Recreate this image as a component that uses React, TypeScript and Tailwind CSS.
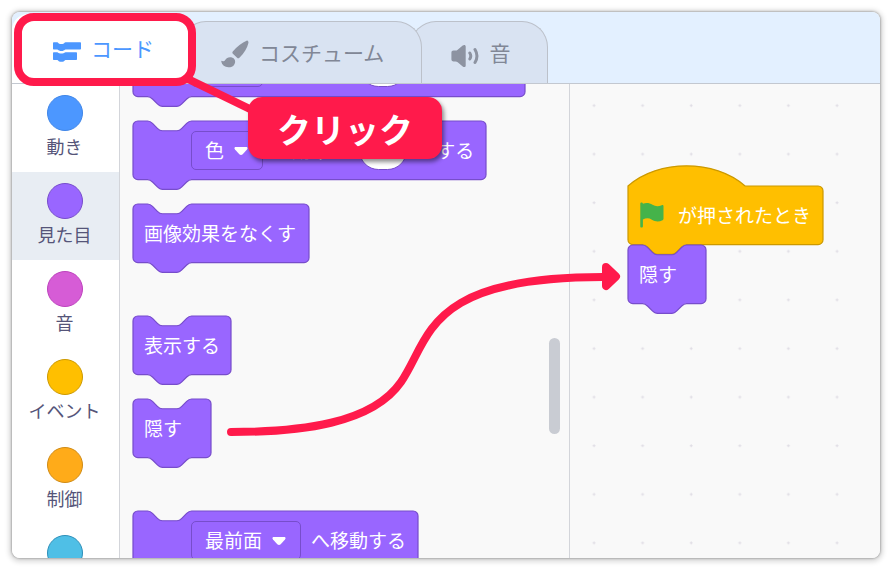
import type { ReactNode } from "react";
import { clsx } from "clsx";

const UNIT = 1.22;
const NOTCH = "H12c2 0 3 1 4 2l4 4c1 1 2 2 4 2h12c2 0 3-1 4-2l4-4c1-1 2-2 4-2";
const BUMP = "H48c-2 0-3 1-4 2l-4 4c-1 1-2 2-4 2H24c-2 0-3-1-4-2l-4-4c-1-1-2-2-4-2H4";

const CATEGORIES = [
  { name: "動き", circle: "bg-[#4c97ff] border-[#3f86e8]" },
  { name: "見た目", circle: "bg-[#9966ff] border-[#774dcb]" },
  { name: "音", circle: "bg-[#d65cd6] border-[#bd42bd]" },
  { name: "イベント", circle: "bg-[#ffbf00] border-[#cc9900]" },
  { name: "制御", circle: "bg-[#ffab19] border-[#cf8b17]" },
  { name: "", circle: "bg-[#4fbfe6] border-[#2e8eb8]" },
];

type BlockProps = {
  width: number;
  hat?: boolean;
  className?: string;
  children: ReactNode;
};

function Block({ width, hat, className, children }: BlockProps) {
  const w = width / UNIT;
  const top = hat ? "M0 0c25-22 71-22 96 0" : `M0 4a4 4 0 0 1 4-4${NOTCH}`;
  const d = `${top}H${w - 4}a4 4 0 0 1 4 4v40a4 4 0 0 1-4 4${BUMP}a4 4 0 0 1-4-4z`;

  return (
    <div
      className={clsx("relative h-[59px] shrink-0 text-[19px] text-white", className)}
      style={{ width }}
    >
      <svg className="absolute inset-0 size-full overflow-visible" aria-hidden="true">
        <path
          d={d}
          transform={`scale(${UNIT})`}
          fill={hat ? "#ffbf00" : "#9966ff"}
          stroke={hat ? "#cc9900" : "#774dcb"}
        />
      </svg>
      <div className="relative flex h-full items-center gap-2.5 pb-px pl-[11px] whitespace-nowrap">
        {children}
      </div>
    </div>
  );
}

function Dropdown({ value, label, className }: { value: string; label: string; className: string }) {
  return (
    <span className={clsx("relative ml-[47px] flex h-[39px] shrink-0", className)}>
      <select
        aria-label={label}
        className="w-full appearance-none rounded-[5px] border border-[#774dcb] bg-[#9966ff] pl-[13px] text-white"
      >
        <option>{value}</option>
      </select>
      <svg className="pointer-events-none absolute top-4 right-[15px] h-2 w-3.5" viewBox="0 0 14 8" fill="#fff" aria-hidden="true">
        <path d="M2 0h10c1.600 0 2 1.400 1 2.500L8.700 7.200c-1 1-2.400 1-3.400 0L1 2.500C0 1.400.4 0 2 0z" />
      </svg>
    </span>
  );
}

function NumberField({ label, value }: { label: string; value: string }) {
  return (
    <input
      aria-label={label}
      defaultValue={value}
      className="h-[39px] w-12 shrink-0 rounded-full border border-[#774dcb] bg-white text-center text-[#575e75]"
    />
  );
}

function CodeIcon() {
  return (
    <svg className="mt-1.5 h-5 w-7" viewBox="0 0 28 20" fill="currentColor" aria-hidden="true">
      <path d="M0 1.200C0 .5.400.2 1 .2h3.200c1 0 1.500 1.800 3 1.800h2.200c1.500 0 2-1.800 3.200-1.800H27c.7 0 1 .4 1 1v5.400c0 .7-.4 1-1 1H12.600c-1 0-1.500 1.300-3 1.300H7.200c-1.500 0-2-1.300-3-1.300H1c-.7 0-1-.4-1-1z" />
      <path d="M0 11.200c0-.7.400-1 1-1h3.200c1 0 1.500 1.300 3 1.300h2.200c1.500 0 2-1.300 3.200-1.300H23c.7 0 1 .4 1 1V17c0 .7-.4 1-1 1H12.600c-1 0-1.500 1.800-3 1.800H7.200c-1.500 0-2-1.800-3-1.800H1c-.7 0-1-.4-1-1z" />
    </svg>
  );
}

function BrushIcon() {
  return (
    <svg className="mt-0.5 h-7 w-7" viewBox="0 0 28 28" fill="#8d93a1" aria-hidden="true">
      <path d="M26 .4c1.200.2 1.700 1.300 1.400 2.600-1.100 4.700-4.200 10.200-9 14.700-.7.700-1.600.7-2.300 0l-4.200-4c-.7-.7-.7-1.400-.1-2.200C15.900 6.600 20.900 2.500 26 .4z" />
      <path d="M9 17.300c3.500 0 5.500 2.200 5.100 5-.4 3.300-3.200 5.300-6.800 5-3.500-.2-6.300-2-7-5.500-.1-.8.300-1.100.9-.9 1.800.7 2.500.2 3.200-1.100 1-1.600 2.400-2.500 4.600-2.500z" />
    </svg>
  );
}

function SoundIcon() {
  return (
    <svg className="mt-1.5 h-6 w-7" viewBox="0 0 28 24" aria-hidden="true">
      <path
        fill="#8d93a1"
        d="M2.600 6.600h2c.8 0 1.400-.3 2.100-.9l5-4.100c1.500-1.100 3-.6 3 1v18.800c0 1.600-1.500 2.100-3 1l-5-4.100c-.7-.6-1.300-.9-2.100-.9h-2C1.200 17.400.4 16.600.4 15.200V8.800c0-1.400.8-2.200 2.200-2.200z"
      />
      <path
        fill="none"
        stroke="#8d93a1"
        strokeWidth="3"
        strokeLinecap="round"
        d="M18.800 9c1.300 2 1.300 4 0 6M24 5.500c2.600 4.300 2.600 8.700 0 13"
      />
    </svg>
  );
}

function GreenFlag() {
  return (
    <svg className="ml-px h-[26px] w-6 shrink-0" viewBox="0 0 24 26" aria-hidden="true">
      <path
        fill="#45b34a"
        d="M1.500.5c1 0 1.400.6 1.400 1.300 3.500-1.500 6.600-.9 9.600 1 3 1.800 5.800 1.900 9.300.4.900-.4 1.700 0 1.700 1v12.600c0 .7-.3 1.100-.9 1.400-3.800 1.700-7.200 1.600-10.700-.5-3-1.800-5.800-1.700-9-.3v6.800c0 .8-.5 1.300-1.400 1.300S.3 25 .3 24.200V1.800C.3 1.100.6.500 1.500.5z"
      />
    </svg>
  );
}

const tabClass =
  "relative flex items-center gap-2.5 border border-b-0 pl-10 pr-[37px] text-[21px] whitespace-nowrap";
const activeTab = "z-20 h-[69px] rounded-t-2xl border-white bg-white pb-px text-[#4c97ff]";
const idleTab = "-ml-3 h-[62px] rounded-t-[26px] border-[#bcc1ca] bg-[#d9e3f2] text-[#818796]";

function TabBar() {
  return (
    <header
      role="tablist"
      className="flex h-[72px] shrink-0 items-end border-b border-[#c3c8d0] bg-[#e3f0ff]"
    >
      <button role="tab" aria-selected="true" className={clsx(tabClass, activeTab)}>
        <CodeIcon />
        コード
      </button>
      <button role="tab" aria-selected="false" className={clsx(tabClass, idleTab, "z-10")}>
        <BrushIcon />
        コスチューム
      </button>
      <button role="tab" aria-selected="false" className={clsx(tabClass, idleTab)}>
        <SoundIcon />
        音
      </button>
    </header>
  );
}

function CategoryMenu() {
  return (
    <nav className="w-[108px] shrink-0 overflow-hidden border-r border-[#d3d5da] bg-white">
      {CATEGORIES.map((category) => (
        <button
          key={category.circle}
          aria-label={category.name || "調べる"}
          className={clsx(
            "flex h-[88px] w-full flex-col items-center pt-[11px] pr-0.5 text-[18px] leading-[22px] text-[#555579]",
            category.name === "見た目" && "bg-[#e8edf3]"
          )}
        >
          <span className={clsx("size-9 rounded-full border", category.circle)} />
          <span className="mt-1">{category.name}</span>
        </button>
      ))}
    </nav>
  );
}

function Palette() {
  return (
    <section className="relative w-[450px] shrink-0 overflow-hidden border-r border-[#d3d5da] bg-[#f9f9f9] pl-[13px]">
      {/* scrolled part way down, so the first block is cut by the tabs */}
      <div className="-mt-[46px] flex flex-col gap-6">
        <Block width={392}>
          <Dropdown value="色" label="効果" className="w-[72px]" />
          の効果を
          <NumberField label="変える量" value="25" />
          ずつ変える
        </Block>
        <Block width={353}>
          <Dropdown value="色" label="効果" className="w-[72px]" />
          の効果を
          <NumberField label="効果の値" value="0" />
          にする
        </Block>
        <Block width={176}>画像効果をなくす</Block>
        <Block width={98} className="mt-[29px]">表示する</Block>
        <Block width={78}>隠す</Block>
        <Block width={285} className="mt-[29px]">
          <Dropdown value="最前面" label="移動先" className="w-[110px]" />
          へ移動する
        </Block>
      </div>
      <div className="absolute top-[254px] right-[9px] h-24 w-[11px] rounded-full bg-[#c9ccd3]" />
    </section>
  );
}

function Workspace() {
  return (
    <section className="relative min-w-0 flex-1 overflow-hidden bg-[#f9f9f9]">
      <svg className="absolute inset-0 size-full" aria-hidden="true">
        <defs>
          <pattern id="grid" width="48.600" height="48.600" patternUnits="userSpaceOnUse">
            <path d="M22.500 21.500h3M24 20v3" stroke="#dfdce4" />
          </pattern>
        </defs>
        <rect width="100%" height="100%" fill="url(#grid)" />
      </svg>
      <div className="absolute top-[102px] left-[58px]">
        <Block width={195} hat>
          <GreenFlag />
          <span className="ml-1">が押されたとき</span>
        </Block>
        <Block width={78}>隠す</Block>
      </div>
    </section>
  );
}

function Guide() {
  return (
    <div className="pointer-events-none absolute inset-0 z-30">
      <svg className="absolute inset-0 size-full" fill="none" stroke="#ff1a4b" aria-hidden="true">
        <rect x="18" y="17" width="174" height="65" rx="16" strokeWidth="8" />
        <path d="M188 79l66 32" strokeWidth="8" />
        <path
          d="M231 432C300 432 372 424 401 382C431 338 425 277 603 277"
          strokeWidth="8"
          strokeLinecap="round"
        />
        <path
          d="M606 267l10 9.500-10 9.500z"
          fill="#ff1a4b"
          strokeWidth="8"
          strokeLinejoin="round"
        />
      </svg>
      <p className="absolute top-[97px] left-[248px] flex h-[62px] w-[194px] items-center justify-center rounded-[14px] bg-[#ff1a4b] text-[34px] font-bold text-white shadow-[2px_3px_4px_rgba(0,0,0,0.45)]">
        クリック
      </p>
    </div>
  );
}

export default function App() {
  return (
    <main className="relative flex h-screen bg-white p-3 font-['Noto_Sans_CJK_JP',sans-serif]">
      <div className="flex min-w-0 flex-1 flex-col overflow-hidden rounded-lg shadow-[0_0_2px_1px_rgba(0,0,0,0.22),0_1px_5px_3px_rgba(0,0,0,0.14)]">
        <TabBar />
        <div className="flex min-h-0 flex-1">
          <CategoryMenu />
          <Palette />
          <Workspace />
        </div>
      </div>
      <Guide />
    </main>
  );
}
